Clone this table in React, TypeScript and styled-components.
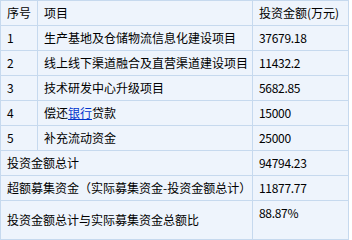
import React from "react";
import styled, { createGlobalStyle } from "styled-components";

const GlobalStyle = createGlobalStyle`
  body {
    margin: 0;
    background: #fff;
    font-family: "Noto Sans CJK SC", "Noto Sans", sans-serif;
  }
`;

const Table = styled.table`
  width: 348px;
  border-collapse: collapse;
  table-layout: fixed;
  background: #eef4fc;
  font-size: 12px;
  color: #000;
`;

const Cell = styled.td<{ $top?: boolean }>`
  border: 1px solid #c6d9ee;
  padding: 0 0 0 6px;
  height: 24px;
  line-height: 24px;
  vertical-align: ${(p) => (p.$top ? "top" : "middle")};
  white-space: nowrap;
  overflow: hidden;
`;

const TallRow = styled.tr`
  height: 39px;
`;

const Link = styled.a`
  color: #0033cc;
  text-decoration: underline;
`;

const Num = styled.span`
  letter-spacing: -0.3px;
`;

type Item = { no: string; name: React.ReactNode; amount: string };

const items: Item[] = [
  { no: "1", name: "生产基地及仓储物流信息化建设项目", amount: "37679.18" },
  { no: "2", name: "线上线下渠道融合及直营渠道建设项目", amount: "11432.2" },
  { no: "3", name: "技术研发中心升级项目", amount: "5682.85" },
  {
    no: "4",
    name: (
      <>
        偿还<Link href="#">银行</Link>贷款
      </>
    ),
    amount: "15000",
  },
  { no: "5", name: "补充流动资金", amount: "25000" },
];

export default function App() {
  return (
    <>
      <GlobalStyle />
      <Table>
        <colgroup>
          <col style={{ width: 37 }} />
          <col style={{ width: 215 }} />
          <col style={{ width: 96 }} />
        </colgroup>
        <tbody>
          <tr>
            <Cell>序号</Cell>
            <Cell>项目</Cell>
            <Cell>投资金额(万元)</Cell>
          </tr>
          {items.map((it) => (
            <tr key={it.no}>
              <Cell>
                <Num>{it.no}</Num>
              </Cell>
              <Cell>{it.name}</Cell>
              <Cell>
                <Num>{it.amount}</Num>
              </Cell>
            </tr>
          ))}
          <tr>
            <Cell colSpan={2}>投资金额总计</Cell>
            <Cell>
              <Num>94794.23</Num>
            </Cell>
          </tr>
          <tr>
            <Cell colSpan={2}>超额募集资金（实际募集资金-投资金额总计）</Cell>
            <Cell>
              <Num>11877.77</Num>
            </Cell>
          </tr>
          <TallRow>
            <Cell colSpan={2}>投资金额总计与实际募集资金总额比</Cell>
            <Cell $top>
              <Num>88.87%</Num>
            </Cell>
          </TallRow>
        </tbody>
      </Table>
    </>
  );
}
